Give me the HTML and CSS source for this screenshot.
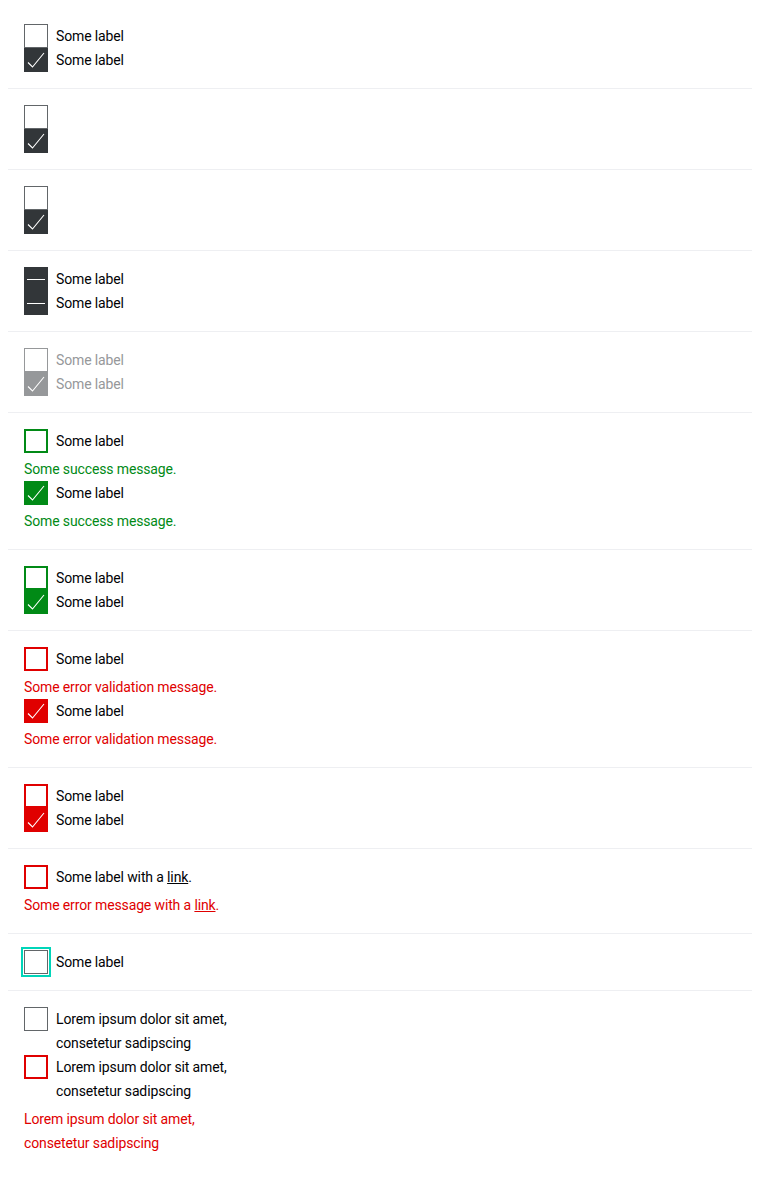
FILE: index.html
```html
<!DOCTYPE html>
<html lang="en">
<head>
<meta charset="utf-8">
<title>Checkboxes</title>
<link rel="stylesheet" href="styles.css">
</head>
<body>
<div class="page">

  <div class="section">
    <label class="cb"><span class="box"></span><span class="text">Some label</span></label>
    <label class="cb"><span class="box box--checked"><svg class="check" viewBox="0 0 24 24"><path d="M4 14.5 L8.5 19 L20 5"/></svg></span><span class="text">Some label</span></label>
  </div>

  <div class="section">
    <label class="cb"><span class="box"></span></label>
    <label class="cb"><span class="box box--checked"><svg class="check" viewBox="0 0 24 24"><path d="M4 14.5 L8.5 19 L20 5"/></svg></span></label>
  </div>

  <div class="section">
    <label class="cb"><span class="box"></span></label>
    <label class="cb"><span class="box box--checked"><svg class="check" viewBox="0 0 24 24"><path d="M4 14.5 L8.5 19 L20 5"/></svg></span></label>
  </div>

  <div class="section">
    <label class="cb"><span class="box box--checked"><span class="dash"></span></span><span class="text">Some label</span></label>
    <label class="cb"><span class="box box--checked"><span class="dash"></span></span><span class="text">Some label</span></label>
  </div>

  <div class="section section--disabled">
    <label class="cb"><span class="box"></span><span class="text">Some label</span></label>
    <label class="cb"><span class="box box--checked"><svg class="check" viewBox="0 0 24 24"><path d="M4 14.5 L8.5 19 L20 5"/></svg></span><span class="text">Some label</span></label>
  </div>

  <div class="section section--success">
    <label class="cb"><span class="box"></span><span class="text">Some label</span></label>
    <p class="msg">Some success message.</p>
    <label class="cb"><span class="box box--checked"><svg class="check" viewBox="0 0 24 24"><path d="M4 14.5 L8.5 19 L20 5"/></svg></span><span class="text">Some label</span></label>
    <p class="msg">Some success message.</p>
  </div>

  <div class="section section--success">
    <label class="cb"><span class="box"></span><span class="text">Some label</span></label>
    <label class="cb"><span class="box box--checked"><svg class="check" viewBox="0 0 24 24"><path d="M4 14.5 L8.5 19 L20 5"/></svg></span><span class="text">Some label</span></label>
  </div>

  <div class="section section--error">
    <label class="cb"><span class="box"></span><span class="text">Some label</span></label>
    <p class="msg">Some error validation message.</p>
    <label class="cb"><span class="box box--checked"><svg class="check" viewBox="0 0 24 24"><path d="M4 14.5 L8.5 19 L20 5"/></svg></span><span class="text">Some label</span></label>
    <p class="msg">Some error validation message.</p>
  </div>

  <div class="section section--error">
    <label class="cb"><span class="box"></span><span class="text">Some label</span></label>
    <label class="cb"><span class="box box--checked"><svg class="check" viewBox="0 0 24 24"><path d="M4 14.5 L8.5 19 L20 5"/></svg></span><span class="text">Some label</span></label>
  </div>

  <div class="section section--error">
    <label class="cb"><span class="box"></span><span class="text">Some label with a <a href="#" class="link">link</a>.</span></label>
    <p class="msg">Some error message with a <a href="#" class="link">link</a>.</p>
  </div>

  <div class="section">
    <label class="cb"><span class="box box--focus"></span><span class="text">Some label</span></label>
  </div>

  <div class="section section--last">
    <div class="narrow">
      <label class="cb"><span class="box"></span><span class="text">Lorem ipsum dolor sit amet, consetetur sadipscing</span></label>
      <div class="section--error">
        <label class="cb"><span class="box"></span><span class="text">Lorem ipsum dolor sit amet, consetetur sadipscing</span></label>
        <p class="msg">Lorem ipsum dolor sit amet, consetetur sadipscing</p>
      </div>
    </div>
  </div>

</div>
</body>
</html>
```

FILE: styles.css
```css
* { box-sizing: border-box; }

html, body {
  background: #ffffff;
}

body {
  margin: 8px;
  font-family: Roboto, "Liberation Sans", Arial, sans-serif;
  font-size: 14px;
  line-height: 24px;
  letter-spacing: -0.13px;
  color: #010205;
}

.section {
  padding: 16px;
  border-bottom: 1px solid #eeeff2;
  display: flex;
  flex-direction: column;
}

.section--last {
  border-bottom: none;
}

.narrow {
  width: 220px;
}

.cb {
  display: flex;
  align-items: flex-start;
  gap: 8px;
  cursor: pointer;
}

.box {
  flex: 0 0 24px;
  width: 24px;
  height: 24px;
  border: 1px solid #626669;
  background: #ffffff;
  position: relative;
  display: flex;
  align-items: center;
  justify-content: center;
}

.box--checked {
  background: #323639;
  border-color: #323639;
}

.check {
  position: absolute;
  left: -1px;
  top: -1px;
  width: 24px;
  height: 24px;
  fill: none;
  stroke: #ffffff;
  stroke-width: 1.1;
}

.dash {
  display: block;
  width: 18px;
  height: 1px;
  background: #ffffff;
}

.box--focus {
  outline: 2px solid #00d5b9;
  outline-offset: 1px;
}

.text {
  display: block;
}

.link {
  color: inherit;
  text-decoration: underline;
}

.msg {
  margin: 4px 0 0 0;
}

/* disabled */
.section--disabled .text { color: #96989a; }
.section--disabled .box { border-color: #96989a; }
.section--disabled .box--checked { background: #96989a; }

/* success */
.section--success .box { border: 2px solid #018a16; }
.section--success .box--checked { background: #018a16; }
.section--success .box--checked .check { left: -2px; top: -2px; }
.section--success .msg { color: #018a16; }

/* error */
.section--error .box { border: 2px solid #e00000; }
.section--error .box--checked { background: #e00000; }
.section--error .box--checked .check { left: -2px; top: -2px; }
.section--error .msg { color: #e00000; }
.section--error .msg .link { color: #e00000; }
```
